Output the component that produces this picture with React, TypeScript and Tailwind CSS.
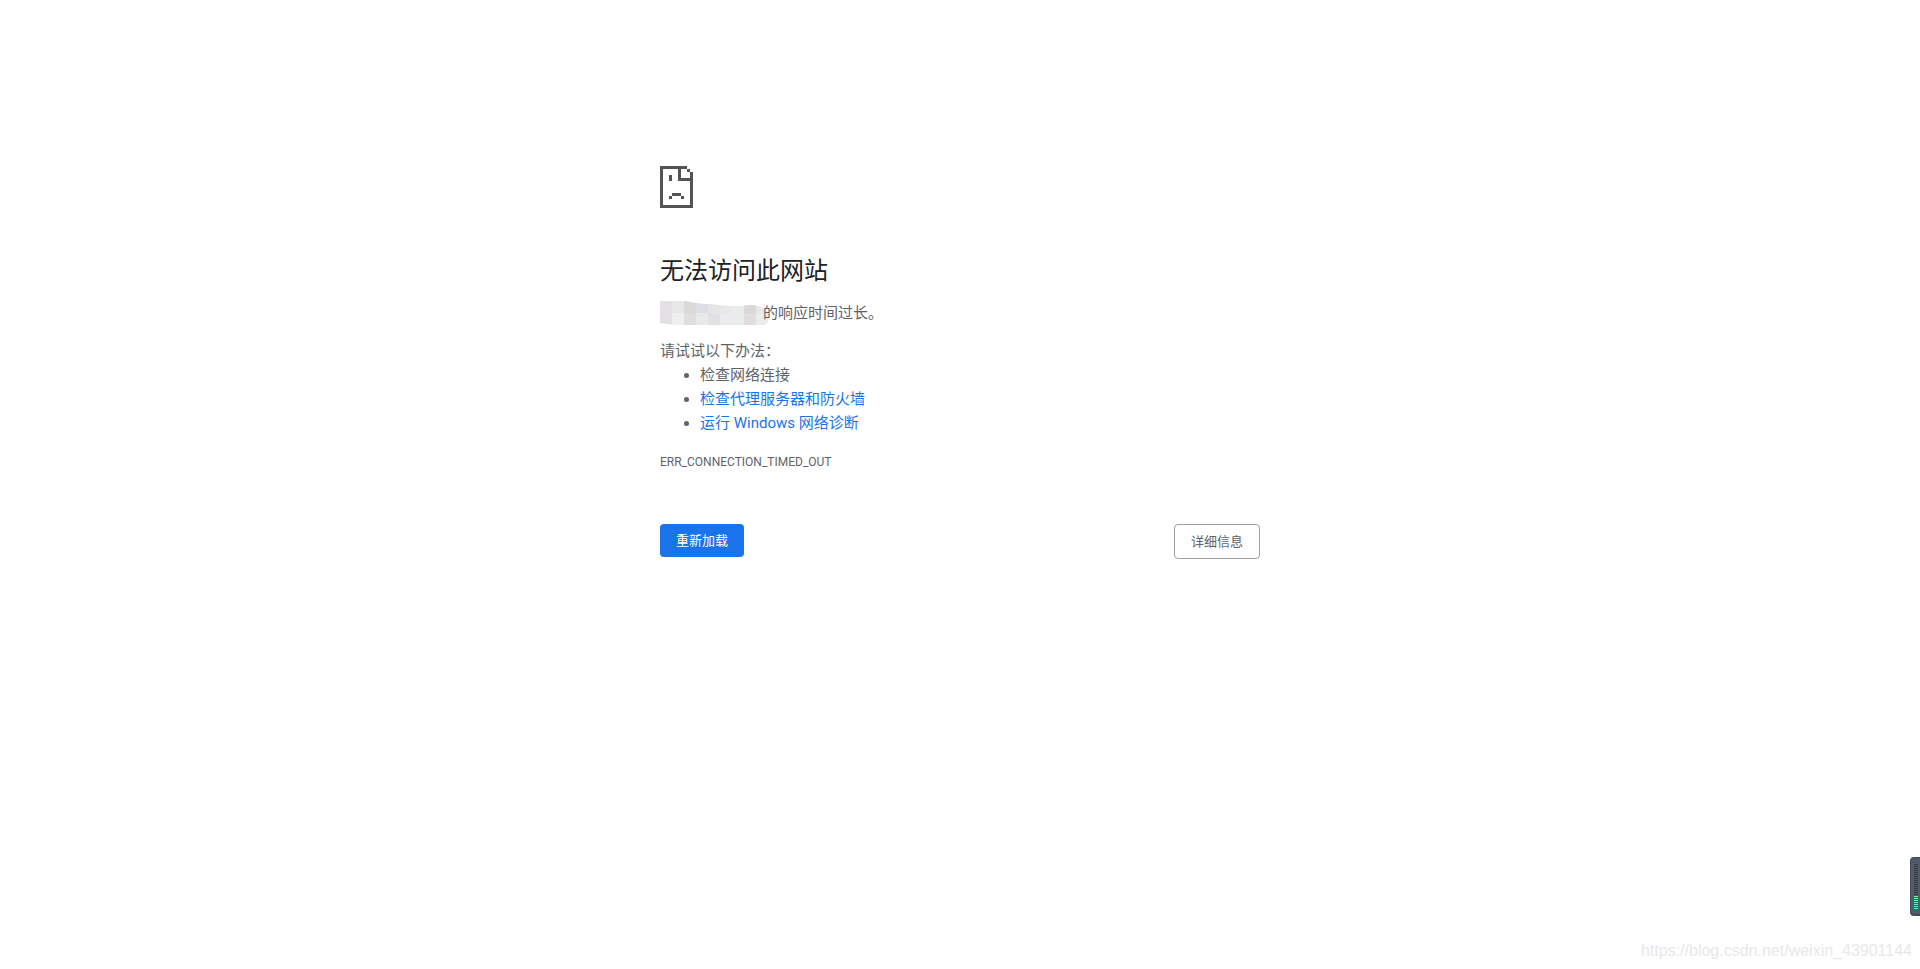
import React from "react";

const SUGGESTIONS = [
  { text: "检查网络连接", link: false },
  { text: "检查代理服务器和防火墙", link: true },
  { text: "运行 Windows 网络诊断", link: true },
];

const MOSAIC = [
  ["#e3e1e3", "#e8e7e8", "#dadada", "#dddee3", "#e6e5e6", "#e8e7e8", "#ebebeb", "#dad9da", "#e8e8e8"],
  ["#e2e0e2", "#efeff2", "#e0dedd", "#e8e9eb", "#e1e1e3", "#ebebed", "#e9ebec", "#e0dddc", "#ebebeb"],
];

function SadPage() {
  return (
    <svg
      width="33"
      height="42"
      viewBox="0 0 11 14"
      fill="#535353"
      shapeRendering="crispEdges"
      aria-hidden="true"
    >
      <path d="M0 0h9v1H7v3h3V2h1v12H0zM1 1v12h9V5H6V1z" fillRule="evenodd" />
      <path d="M9 1h1v1H9z" />
      <path d="M3 3h1v2H3zM4 9h3v1H4zM3 10h1v1H3zM7 10h1v1H7z" />
    </svg>
  );
}

function HiddenHost() {
  return (
    <svg width="109" height="24" viewBox="0 0 109 24" aria-hidden="true">
      <clipPath id="smudge">
        <path d="M0 0h24c8 1 14 3 24 3 12 1 22 3 34 2 9-2 15-1 20 2 6 2 8 8 6 13-1 3-3 4-6 4H24C14 24 8 23 0 22z" />
      </clipPath>
      <g clipPath="url(#smudge)" shapeRendering="crispEdges">
        <rect width="109" height="24" fill="#e8e8e8" />
        {MOSAIC.map((row, y) =>
          row.map((fill, x) => (
            <rect
              key={`${x}-${y}`}
              x={x * 12}
              y={y * 12}
              width="12"
              height="12"
              fill={fill}
            />
          )),
        )}
      </g>
    </svg>
  );
}

function Meter() {
  const bars = Array.from({ length: 23 }, (_, i) => i);
  return (
    <svg
      width="10"
      height="59"
      viewBox="0 0 10 59"
      className="fixed right-0 bottom-[53px]"
      aria-hidden="true"
    >
      <path d="M10 0H4a4 4 0 0 0-4 4v51a4 4 0 0 0 4 4h6z" fill="#444955" />
      <path d="M10 1H4a3 3 0 0 0-3 3v50a3 3 0 0 0 3 3h6z" fill="#535a69" />
      {bars.map((i) => (
        <rect
          key={i}
          x="4"
          y={7 + i * 2}
          width="4"
          height="1"
          shapeRendering="crispEdges"
          fill={i < 16 ? "#343944" : i < 19 ? "#7df08a" : "#4fecc8"}
        />
      ))}
    </svg>
  );
}

export default function App() {
  return (
    <div className="flex min-h-screen flex-col bg-white px-6 font-[Roboto,'Noto_Sans_CJK_SC',sans-serif] text-[15px] leading-6 text-[#5f6368]">
      <main className="mx-auto w-full max-w-[600px] pt-[166px]">
        <SadPage />
        <h1 className="mt-12 text-2xl leading-[30px] text-[#202124]">
          无法访问此网站
        </h1>
        <p className="mt-[15px] flex">
          <HiddenHost />
          <span className="-ml-1.5">的响应时间过长。</span>
        </p>
        <p className="mt-3.5">请试试以下办法：</p>
        <ul className="list-disc pl-10">
          {SUGGESTIONS.map((item) => (
            <li key={item.text}>
              {item.link ? (
                <a href="#" className="text-[#1a73e8]">
                  {item.text}
                </a>
              ) : (
                item.text
              )}
            </li>
          ))}
        </ul>
        <div className="mt-[15px] text-xs leading-6">
          ERR_CONNECTION_TIMED_OUT
        </div>
        <div className="mt-[50px] flex items-start justify-between text-[13px] leading-[17px]">
          <button
            type="button"
            className="rounded-sm bg-[#1a73e8] px-4 py-2 text-white"
          >
            重新加载
          </button>
          <button
            type="button"
            className="rounded-sm border border-[#9aa0a6] px-4 py-2"
          >
            详细信息
          </button>
        </div>
      </main>
      <Meter />
      <footer className="-mr-4 mt-auto self-end pb-1.5 font-['Liberation_Sans',sans-serif] text-base text-[#e8e8e8]">
        https://blog.csdn.net/weixin_43901144
      </footer>
    </div>
  );
}
